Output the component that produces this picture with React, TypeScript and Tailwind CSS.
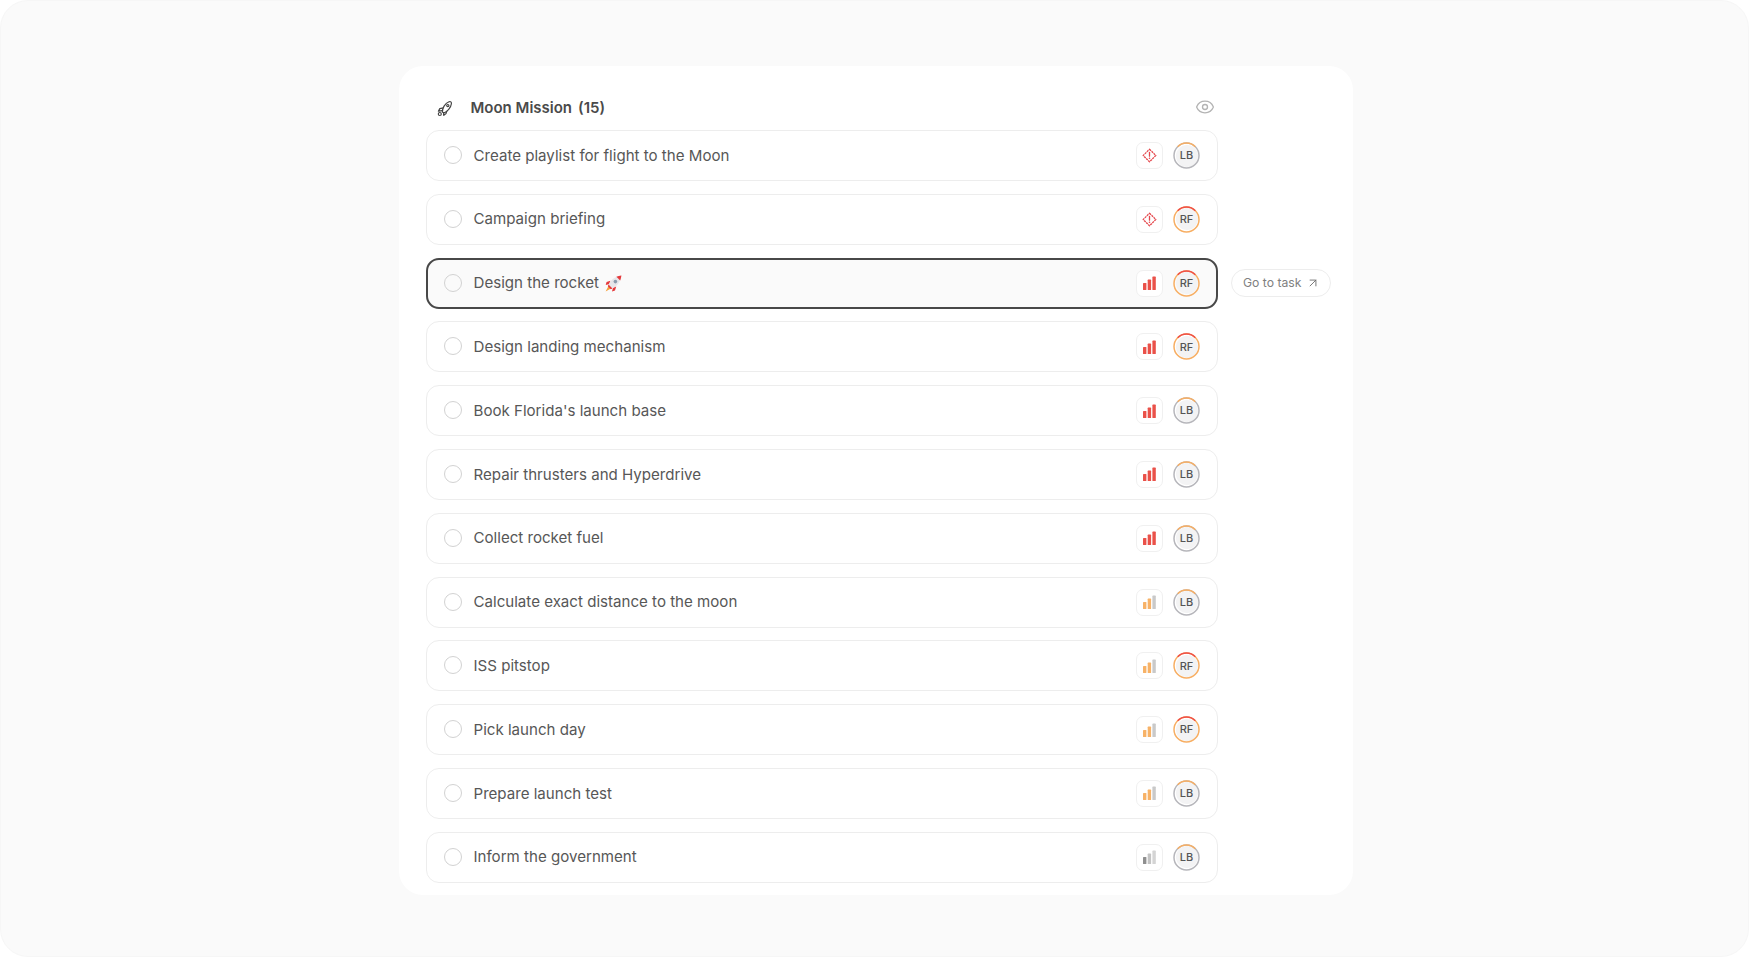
import { Eye, ArrowUpRight } from "lucide-react";

type Priority = "urgent" | "high" | "medium" | "low";
type Person = "LB" | "RF";

const tasks: { title: string; priority: Priority; person: Person; emoji?: boolean; active?: boolean }[] = [
  { title: "Create playlist for flight to the Moon", priority: "urgent", person: "LB" },
  { title: "Campaign briefing", priority: "urgent", person: "RF" },
  { title: "Design the rocket", priority: "high", person: "RF", emoji: true, active: true },
  { title: "Design landing mechanism", priority: "high", person: "RF" },
  { title: "Book Florida's launch base", priority: "high", person: "LB" },
  { title: "Repair thrusters and Hyperdrive", priority: "high", person: "LB" },
  { title: "Collect rocket fuel", priority: "high", person: "LB" },
  { title: "Calculate exact distance to the moon", priority: "medium", person: "LB" },
  { title: "ISS pitstop", priority: "medium", person: "RF" },
  { title: "Pick launch day", priority: "medium", person: "RF" },
  { title: "Prepare launch test", priority: "medium", person: "LB" },
  { title: "Inform the government", priority: "low", person: "LB" },
];

function PriorityIcon({ priority }: { priority: Priority }) {
  if (priority === "urgent") {
    return (
      <svg width="15" height="15" viewBox="0 0 15 15" fill="none">
        <path
          d="M7.5 1.2 13.8 7.5 7.5 13.8 1.2 7.5Z"
          stroke="#e5484d"
          strokeWidth="1.3"
          strokeLinejoin="round"
          strokeDasharray="2.2 0.7"
        />
        <path d="M7.5 4.4V8.2" stroke="#e5484d" strokeWidth="1.3" strokeLinecap="round" />
        <circle cx="7.5" cy="10.2" r="0.8" fill="#e5484d" />
      </svg>
    );
  }

  const colors = {
    high: ["#ea5149", "#ea5149", "#ea5149"],
    medium: ["#f7b267", "#f7b267", "#c9c9c9"],
    low: ["#8f8f8f", "#c4c4c4", "#d4d4d4"],
  }[priority];

  return (
    <svg width="13" height="14" viewBox="0 0 13 14">
      <rect x="0" y="7" width="3.4" height="7" rx="0.6" fill={colors[0]} />
      <rect x="4.7" y="3.6" width="3.4" height="10.4" rx="0.6" fill={colors[1]} />
      <rect x="9.4" y="0.6" width="3.4" height="13.4" rx="0.6" fill={colors[2]} />
    </svg>
  );
}

function Avatar({ person }: { person: Person }) {
  const ringMain = person === "RF" ? "#f7ae63" : "#b6b6bb";
  const ringTop = person === "RF" ? "#ef4f47" : "#f7ae63";

  return (
    <div className="relative flex h-[27px] w-[27px] items-center justify-center">
      <svg width="27" height="27" viewBox="0 0 27 27" fill="none" className="absolute inset-0">
        <circle cx="13.5" cy="13.5" r="12.5" stroke={ringMain} strokeWidth="1.5" />
        <path d="M4.7 4.7A12.5 12.5 0 0 1 22.3 4.7" stroke={ringTop} strokeWidth="1.5" />
      </svg>
      <div className="flex h-[22px] w-[22px] items-center justify-center rounded-full bg-[#f3f3f4] text-[11px] font-medium text-[#555555]">
        {person}
      </div>
    </div>
  );
}

// header rocket, outline only
function RocketOutline() {
  return (
    <svg width="19" height="19" viewBox="0 0 19 19" fill="none" stroke="#444444" strokeWidth="1.2" strokeLinejoin="round">
      <path d="M7.4 13.2C7 9.6 10 4.2 14 2.8 15.6 2.2 16.6 3 16.4 4.8 16 8.6 12 12.6 9.4 13.8Z" />
      <path d="M8.4 8.8 4.8 9.6 3.4 12.2 7.2 11.6" />
      <path d="M11.8 11.8 11 14.6 8.8 16.4 8.6 13.6" />
      <circle cx="12.8" cy="6.6" r="1.1" />
      <circle cx="4.8" cy="15" r="1.5" />
    </svg>
  );
}

function RocketEmoji() {
  return (
    <svg width="17" height="17" viewBox="0 0 17 17" className="ml-[6px] shrink-0">
      <path d="M5.4 5.8 1.6 7 0.6 10 4.2 9Z" fill="#e5383b" />
      <path d="M11.2 11.6 10 15.4 7 16.4 8 12.8Z" fill="#e5383b" />
      <path d="M3.8 10.6 0.6 16.4 6.4 13.2Z" fill="#f7a13c" />
      <path d="M3.6 9.6C5.6 5.2 9.6 1.8 16.4 0.6 15.2 7.4 11.8 11.4 7.4 13.4Z" fill="#e6e6ea" />
      <path d="M11.4 1.8C13 1.2 14.6 0.8 16.4 0.6 16.2 2.4 15.8 4 15.2 5.6Z" fill="#e5383b" />
      <path d="M3.6 9.6 7.4 13.4 5.8 14.2 2.8 11.2Z" fill="#e5383b" />
      <circle cx="10.4" cy="6.6" r="1.8" fill="#8a9bad" />
    </svg>
  );
}

function TaskRow({ title, priority, person, emoji, active }: (typeof tasks)[number]) {
  return (
    <div className="flex items-center gap-[13px]">
      <div
        className={
          active
            ? "flex h-[51px] w-[792px] shrink-0 items-center rounded-[13px] border-2 border-[#484848] bg-[#fafafa] pr-[16px] pl-[16px]"
            : "flex h-[51px] w-[792px] shrink-0 items-center rounded-[13px] border border-[#ededed] bg-white pr-[17px] pl-[17px]"
        }
      >
        <div className="mb-[1px] h-[18px] w-[18px] shrink-0 rounded-full border-[1.5px] border-[#d2d2d2]" />
        <span className="mt-[1px] ml-[11.5px] text-[15.1px] text-[#575757]">{title}</span>
        {emoji ? <RocketEmoji /> : null}
        <div className="ml-auto flex items-center gap-[10px]">
          <div className="flex h-[27px] w-[27px] items-center justify-center rounded-[7px] border border-[#f0f0f0] bg-white">
            <PriorityIcon priority={priority} />
          </div>
          <Avatar person={person} />
        </div>
      </div>
      {active ? (
        <button className="flex h-[28px] items-center gap-[5px] rounded-full border border-[#ededed] bg-white pr-[10px] pl-[11px] text-[12.2px] whitespace-nowrap text-[#808080]">
          Go to task
          <ArrowUpRight size={14} strokeWidth={1.6} className="text-[#707070]" />
        </button>
      ) : null}
    </div>
  );
}

export default function App() {
  return (
    <div className="h-[957px] bg-white font-['Inter',sans-serif]">
      <div className="flex h-full items-start rounded-[28px] border border-[#f6f6f6] bg-[#fafafa] pt-[65px] pl-[398px]">
        <div className="h-[829px] w-[954px] overflow-hidden rounded-[24px] bg-white pt-[27px] pl-[27px]">
          <div className="flex h-[30px] w-[792px] items-center pr-[3px] pl-[9px]">
            <RocketOutline />
            <span className="ml-[16.5px] text-[15px] font-semibold text-[#4a4a4a]">Moon Mission</span>
            <span className="ml-[6px] text-[15px] font-semibold text-[#4a4a4a]">(15)</span>
            <Eye size={20} strokeWidth={1.6} className="mb-[2px] ml-auto text-[#b4b4b4]" />
          </div>
          <div className="mt-[7px] flex flex-col gap-[12.8px]">
            {tasks.map((task) => (
              <TaskRow key={task.title} {...task} />
            ))}
          </div>
        </div>
      </div>
    </div>
  );
}
